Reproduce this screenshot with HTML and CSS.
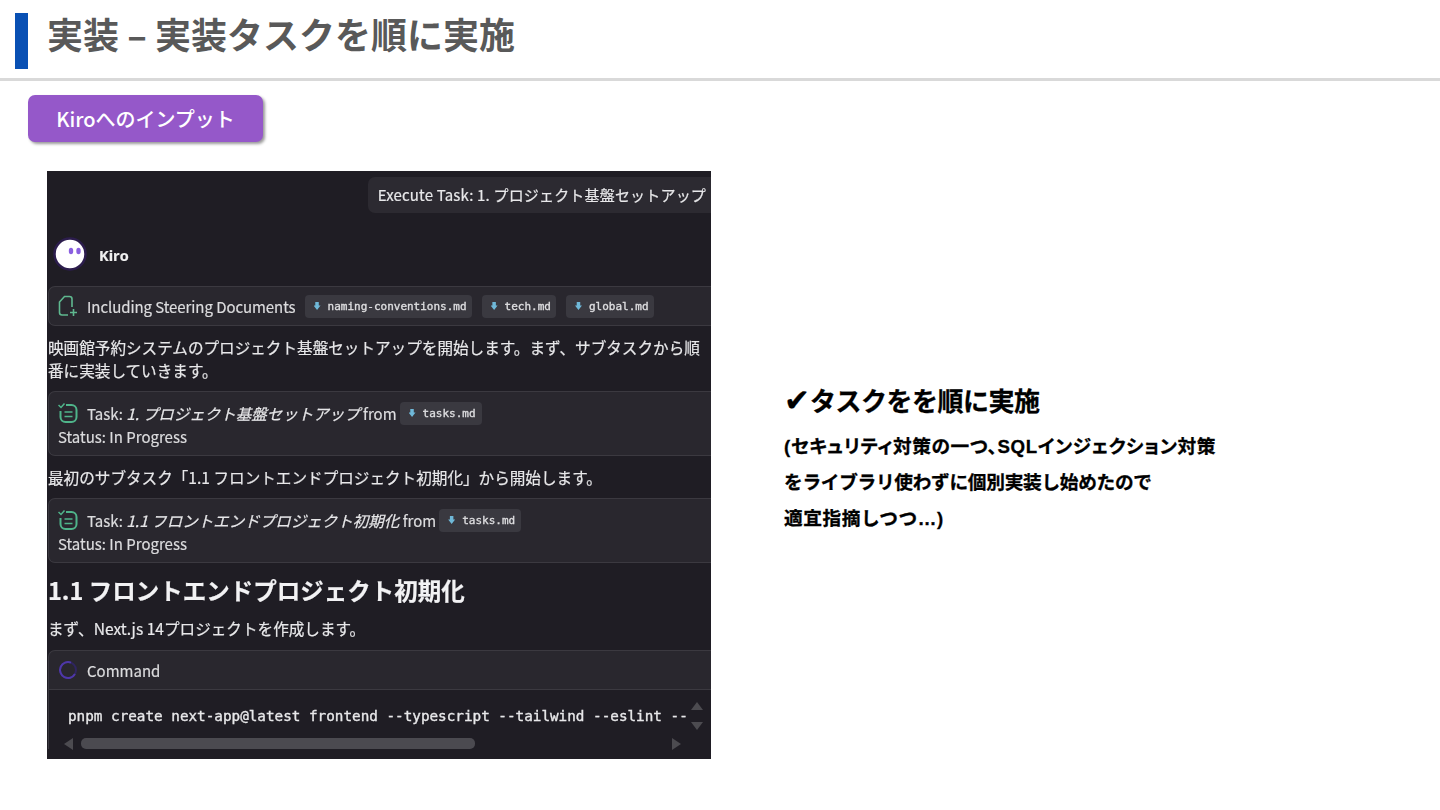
FILE: index.html
```html
<!DOCTYPE html>
<html lang="ja">
<head>
<meta charset="utf-8">
<title>実装</title>
<link rel="stylesheet" href="styles.css">
</head>
<body>
<header class="header">
  <div class="accent"></div>
  <h1 class="title">実装 – 実装タスクを順に実施</h1>
</header>
<div class="label-row"><div class="label">Kiroへのインプット</div></div>
<main class="main">
  <section class="panel">
    <div class="user-row"><div class="bubble">Execute Task: 1. プロジェクト基盤セットアップ</div></div>
    <div class="kiro-row">
      <svg class="avatar" width="34" height="34" viewBox="0 0 34 34"><circle cx="17" cy="17" r="15.500" fill="#fff" stroke="#2c1d4d" stroke-width="2.500"/><ellipse cx="18" cy="14" rx="2.200" ry="3.200" fill="#8a5fe0"/><ellipse cx="25.500" cy="14" rx="2.200" ry="3.200" fill="#8a5fe0"/></svg>
      <span class="kiro-name">Kiro</span>
    </div>
    <div class="card card-steer">
      <svg class="icon" width="20" height="22" viewBox="0 0 20 22" fill="none" stroke="#5fb88f" stroke-width="1.600"><path d="M10 20H4a2.500 2.500 0 0 1-2.500-2.500V7L6.500 1.500H11.500A2.500 2.500 0 0 1 14 4V12"/><path d="M15.500 14v7M12 17.500h7"/></svg>
      <span class="card-text card-text-tight">Including Steering Documents</span>
      <span class="chip chip-first"><i class="chip-dot"></i>naming-conventions.md</span>
      <span class="chip"><i class="chip-dot"></i>tech.md</span>
      <span class="chip"><i class="chip-dot"></i>global.md</span>
    </div>
    <p class="para para-a">映画館予約システムのプロジェクト基盤セットアップを開始します。まず、サブタスクから順番に実装していきます。</p>
    <div class="card card-task">
      <div class="task-line">
        <svg class="icon" width="20" height="22" viewBox="0 0 20 22" fill="none" stroke="#4fb48a" stroke-width="2"><path d="M0.500 3l2.500 2.500 3.500-4" stroke-width="1.500"/><path d="M8 3h5.500A5 5 0 0 1 18.500 8v7a5 5 0 0 1-5 5h-6a5 5 0 0 1-5-5V9"/><path d="M6.500 10h8M6.500 14.500h8" stroke-width="1.600"/></svg>
        <span class="card-text">Task: <em>1. プロジェクト基盤セットアップ</em> from</span>
        <span class="chip chip-task"><i class="chip-dot"></i>tasks.md</span>
      </div>
      <div class="status">Status: In Progress</div>
    </div>
    <p class="para para-b">最初のサブタスク「1.1 フロントエンドプロジェクト初期化」から開始します。</p>
    <div class="card card-task">
      <div class="task-line">
        <svg class="icon" width="20" height="22" viewBox="0 0 20 22" fill="none" stroke="#4fb48a" stroke-width="2"><path d="M0.500 3l2.500 2.500 3.500-4" stroke-width="1.500"/><path d="M8 3h5.500A5 5 0 0 1 18.500 8v7a5 5 0 0 1-5 5h-6a5 5 0 0 1-5-5V9"/><path d="M6.500 10h8M6.500 14.500h8" stroke-width="1.600"/></svg>
        <span class="card-text">Task: <em>1.1 フロントエンドプロジェクト初期化</em> from</span>
        <span class="chip chip-task"><i class="chip-dot"></i>tasks.md</span>
      </div>
      <div class="status">Status: In Progress</div>
    </div>
    <h2 class="panel-heading">1.1 フロントエンドプロジェクト初期化</h2>
    <p class="para para-c">まず、Next.js 14プロジェクトを作成します。</p>
    <div class="command">
      <div class="command-head">
        <svg class="icon" width="20" height="20" viewBox="0 0 20 20" fill="none" stroke-width="2"><circle cx="10" cy="10" r="8" stroke="#2f2560"/><path d="M13 2.600A8 8 0 1 0 17 14" stroke="#4f38a8"/></svg>
        <span class="card-text">Command</span>
      </div>
      <div class="command-body">
        <div class="code-row">
          <code class="code">pnpm create next-app@latest frontend --typescript --tailwind --eslint --</code>
          <div class="vscroll"><span class="arrow-up"></span><span class="arrow-down"></span></div>
        </div>
        <div class="hscroll">
          <span class="arrow-left"></span>
          <span class="thumb"></span>
          <span class="arrow-right"></span>
        </div>
      </div>
    </div>
  </section>
  <section class="notes">
    <h2 class="notes-title"><span class="check">✔</span>タスクをを順に実施</h2>
    <p class="notes-line notes-line-first">(セキュリティ対策の一つ、SQLインジェクション対策</p>
    <p class="notes-line">をライブラリ使わずに個別実装し始めたので</p>
    <p class="notes-line notes-line-last">適宜指摘しつつ…)</p>
  </section>
</main>
</body>
</html>
```
FILE: styles.css
```css
* { box-sizing: border-box; }
html, body { margin: 0; padding: 0; }
body {
  width: 1440px;
  height: 810px;
  overflow: hidden;
  background: #fff;
  font-family: "Noto Sans CJK JP", "Noto Sans", sans-serif;
}
.header {
  height: 81px;
  border-bottom: 3px solid #d9d9d9;
  display: flex;
  align-items: flex-start;
  padding: 13px 0 0 15px;
}
.accent { width: 13px; height: 56px; background: #0950b4; }
.title {
  margin: 0 0 0 19px;
  font-size: 36px;
  line-height: 40px;
  font-weight: 700;
  color: #595959;
}
.label-row { padding: 14px 0 0 28px; }
.label {
  width: 235px;
  height: 47px;
  background: #9558c9;
  border-radius: 7px;
  box-shadow: 2px 2px 3px rgba(0,0,0,.4);
  color: #fff;
  font-size: 20px;
  font-weight: 500;
  line-height: 47px;
  text-align: center;
}
.main {
  display: flex;
  align-items: center;
  padding: 29px 0 0 47px;
}
.panel {
  width: 664px;
  height: 588px;
  flex: none;
  background: #1f1d24;
  overflow: hidden;
  padding: 6px 0 0 1px;
  color: #e6e6e8;
  font-size: 15px;
  filter: blur(.35px);
  -webkit-text-stroke: .2px;
}
.user-row { display: flex; justify-content: flex-end; }
.bubble {
  height: 36px;
  padding: 0 5px 0 10px;
  background: #2c2a31;
  border-radius: 7px 0 0 7px;
  line-height: 36px;
  white-space: nowrap;
  font-size: 15px;
  letter-spacing: .18px;
  color: #e8e8ea;
}
.kiro-row {
  display: flex;
  align-items: center;
  height: 34px;
  margin-top: 24px;
  padding-left: 5px;
}
.kiro-name { margin: 2px 0 0 12px; font-size: 14.500px; font-weight: 700; color: #f0f0f0; font-family: "Open Sans", sans-serif; }
.card {
  background: #29272e;
  border: 1px solid #3b3940;
  border-right: 0;
  border-radius: 7px 0 0 7px;
}
.card-steer {
  display: flex;
  align-items: center;
  height: 40px;
  margin-top: 15px;
  padding-left: 9px;
}
.icon { flex: none; }
.card-text { margin-left: 9px; font-size: 15px; white-space: nowrap; color: #dcdcde; }
.card-text-tight { letter-spacing: -.07px; }
.card-text em { font-style: italic; font-size: 15.500px; color: #e6e6e8; }
.chip {
  display: inline-flex;
  align-items: center;
  height: 23px;
  margin-left: 10px;
  padding: 0 5px 0 9px;
  background: #3a3940;
  border-radius: 4px;
  font-family: "DejaVu Sans Mono", monospace;
  font-size: 11px;
  white-space: nowrap;
  color: #dedee0;
  -webkit-text-stroke: .35px;
}
.chip-first { margin-left: 9px; }
.chip-dot {
  width: 7px;
  height: 8px;
  margin-right: 7px;
  background: #6fb8d8;
  clip-path: polygon(25% 0, 75% 0, 75% 45%, 100% 45%, 50% 100%, 0 45%, 25% 45%);
}
.chip-task { margin-left: 3px; padding-right: 6px; }
.para { margin: 0; font-size: 15.600px; line-height: 23px; color: #e8e8ea; }
.para-a { margin-top: 10px; width: 660px; }
.para-b { margin-top: 10px; }
.para-c { margin-top: 12px; }
.card-task {
  height: 65px;
  padding: 10px 0 0 9px;
}
.para-a + .card-task { margin-top: 9px; }
.para-b + .card-task { margin-top: 9px; }
.task-line { display: flex; align-items: center; height: 22px; }
.status { margin-top: 1px; font-size: 15px; line-height: 23px; color: #dcdcde; }
.panel-heading {
  margin: 12px 0 0;
  font-size: 23.500px;
  line-height: 30px;
  font-weight: 700;
  color: #f2f2f4;
}
.command { margin-top: 10px; }
.command-head {
  display: flex;
  align-items: center;
  height: 40px;
  padding-left: 9px;
  background: #29272e;
  border: 1px solid #3b3940;
  border-right: 0;
  border-radius: 7px 0 0 0;
}
.command-body { border-left: 1px solid #3b3940; }
.code-row { display: flex; height: 48px; padding: 12px 0 0 19px; }
.code {
  width: 622px;
  font-family: "DejaVu Sans Mono", monospace;
  font-size: 14.300px;
  line-height: 28px;
  white-space: nowrap;
  overflow: hidden;
  color: #e8e8ea;
  -webkit-text-stroke: .35px;
}
.vscroll { display: flex; flex-direction: column; gap: 12px; margin-left: 1px; }
.arrow-up, .arrow-down, .arrow-left, .arrow-right { display: block; width: 0; height: 0; }
.arrow-up { border: 6px solid transparent; border-top: 0; border-bottom: 8px solid #4c4b50; }
.arrow-down { border: 6px solid transparent; border-bottom: 0; border-top: 8px solid #4c4b50; }
.hscroll { display: flex; align-items: center; height: 11px; padding-left: 15px; }
.arrow-left { border: 6px solid transparent; border-left: 0; border-right: 9px solid #4c4b50; }
.arrow-right { border: 6px solid transparent; border-right: 0; border-left: 9px solid #4c4b50; margin-left: 197px; }
.thumb { width: 394px; height: 11px; margin-left: 8px; background: #4b4a50; border-radius: 5px; }
.notes {
  margin-left: 73px;
  color: #000;
  font-weight: 700;
  margin-bottom: 13px;
  -webkit-text-stroke: .3px #000;
}
.notes-title { margin: 0 0 9px; font-size: 26px; line-height: 40px; font-weight: 700; letter-spacing: -.5px; }
.check { font-size: 31px; letter-spacing: 0; font-family: "DejaVu Sans", sans-serif; line-height: 40px; }
.notes-line { margin: 0; font-size: 18.670px; line-height: 36px; letter-spacing: -.27px; font-family: "Liberation Sans", "Noto Sans CJK JP", sans-serif; }
.notes-line-first { letter-spacing: .65px; font-feature-settings: "palt"; }
.notes-line-last { letter-spacing: .6px; }
```
